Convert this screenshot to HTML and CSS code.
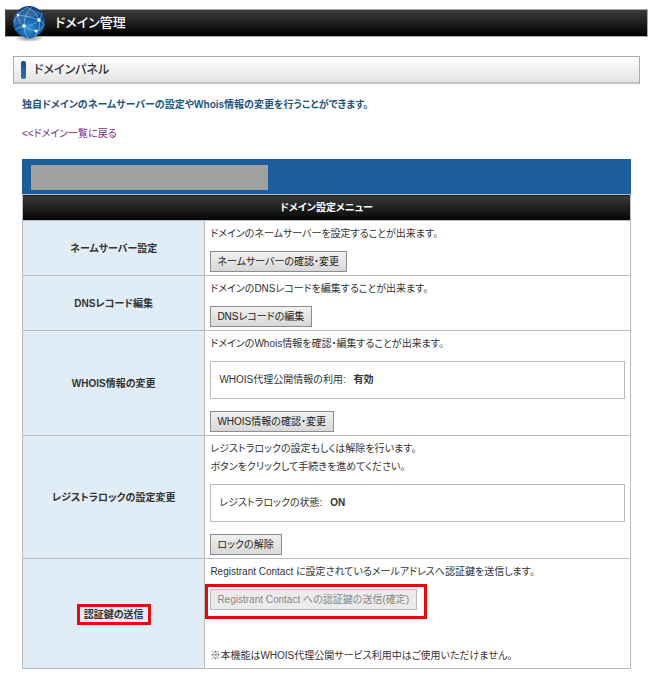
FILE: index.html
```html
<!DOCTYPE html>
<html lang="ja">
<head>
    <meta charset="UTF-8">
    <meta name="viewport" content="width=device-width, initial-scale=1.0">
    <title>ドメイン管理</title>
    <link rel="stylesheet" href="styles.css">
</head>
<body>
    <header class="page-header">
        <svg class="globe" viewBox="0 0 36 38" aria-hidden="true">
            <defs>
                <radialGradient id="ball" cx="50%" cy="70%" r="65%">
                    <stop offset="0" stop-color="#2b93d6"/>
                    <stop offset="0.5" stop-color="#175fa9"/>
                    <stop offset="1" stop-color="#103f7d"/>
                </radialGradient>
                <radialGradient id="shade">
                    <stop offset="0" stop-color="#000" stop-opacity="0.5"/>
                    <stop offset="1" stop-color="#000" stop-opacity="0"/>
                </radialGradient>
            </defs>
            <ellipse cx="18" cy="33" rx="15" ry="4" fill="url(#shade)"/>
            <circle cx="18" cy="17" r="16" fill="url(#ball)"/>
            <path d="M4 10C10 3 25 2 31 9C24 11 12 14 3 22C2 17 2 13 4 10z" fill="#fff" opacity="0.13"/>
            <g fill="none" stroke="#9fd0ea" stroke-width="0.6">
                <path d="M7 10Q19 11 28 15Q32 17 33 20"/>
                <path d="M21 2Q13 9 13 21Q13 28 17 33"/>
                <path d="M15 2Q24 5 28 15Q30 24 24 31"/>
                <path d="M7 10Q7 17 13 21Q19 26 26 26Q30 25 33 20"/>
                <path d="M13 21Q22 21 28 15Q31 11 31 8"/>
                <path d="M7 10Q10 5 16 3M13 21Q7 22 4 25M7 10Q4 13 3 18"/>
            </g>
            <g fill="#e9fbff">
                <circle cx="7" cy="10" r="1.3"/>
                <circle cx="28" cy="15" r="1.7"/>
                <circle cx="13" cy="21" r="1.8"/>
                <circle cx="25" cy="26" r="1.5"/>
            </g>
        </svg>
        <h1>ドメイン管理</h1>
    </header>

    <main class="content">
        <h2 class="panel-title">ドメインパネル</h2>
        <p class="lead">独自ドメインのネームサーバーの設定やWhois情報の変更を行うことができます。</p>
        <p class="back"><a href="#">&lt;&lt;ドメイン一覧に戻る</a></p>

        <table class="menu">
            <thead>
                <tr>
                    <td class="domain" colspan="2"><div class="mask"></div></td>
                </tr>
                <tr>
                    <th class="menu-title" colspan="2">ドメイン設定メニュー</th>
                </tr>
            </thead>
            <tbody>
                <tr>
                    <th scope="row">ネームサーバー設定</th>
                    <td>
                        <p>ドメインのネームサーバーを設定することが出来ます。</p>
                        <button type="button">ネームサーバーの確認・変更</button>
                    </td>
                </tr>
                <tr>
                    <th scope="row">DNSレコード編集</th>
                    <td>
                        <p>ドメインのDNSレコードを編集することが出来ます。</p>
                        <button type="button">DNSレコードの編集</button>
                    </td>
                </tr>
                <tr>
                    <th scope="row">WHOIS情報の変更</th>
                    <td>
                        <p>ドメインのWhois情報を確認・編集することが出来ます。</p>
                        <div class="status">WHOIS代理公開情報の利用: <strong>有効</strong></div>
                        <button type="button">WHOIS情報の確認・変更</button>
                    </td>
                </tr>
                <tr>
                    <th scope="row">レジストラロックの設定変更</th>
                    <td>
                        <p>レジストラロックの設定もしくは解除を行います。<br>ボタンをクリックして手続きを進めてください。</p>
                        <div class="status">レジストラロックの状態: <strong>ON</strong></div>
                        <button type="button">ロックの解除</button>
                    </td>
                </tr>
                <tr>
                    <th scope="row"><span class="marked">認証鍵の送信</span></th>
                    <td>
                        <p>Registrant Contact に設定されているメールアドレスへ認証鍵を送信します。</p>
                        <div class="marked-button">
                            <button type="button" disabled>Registrant Contact への認証鍵の送信(確定)</button>
                        </div>
                        <p class="note">※本機能はWHOIS代理公開サービス利用中はご使用いただけません。</p>
                    </td>
                </tr>
            </tbody>
        </table>
    </main>
</body>
</html>
```
FILE: styles.css
```css
* {
    box-sizing: border-box;
}
body {
    margin: 0;
    padding: 9px 2px 0 5px;
    background: #fff;
    color: #333;
    font-family: "Liberation Sans", "Noto Sans CJK JP", sans-serif;
    font-size: 10px;
    font-feature-settings: "palt";
    line-height: 18px;
}
h1, h2, p {
    margin: 0;
}

/* header bar */
.page-header {
    position: relative;
    height: 28px;
    padding-left: 49px;
    border: 1px solid #aaa;
    border-left-color: #444;
    background: linear-gradient(#3c3c3c, #000);
    color: #fff;
}
.page-header h1 {
    font-size: 13px;
    font-weight: 500;
    line-height: 26px;
}
.globe {
    position: absolute;
    left: 5px;
    top: -5px;
    width: 36px;
    height: 38px;
}

.content {
    padding: 19px 8px 0;
}
.panel-title {
    display: flex;
    align-items: center;
    gap: 8px;
    height: 28px;
    padding-left: 7px;
    border: 1px solid #aaa;
    border-bottom: 2px solid #c4c4c4;
    background: linear-gradient(#fff, #e4e4e4);
    font-size: 12px;
    font-weight: 500;
}
.panel-title::before {
    content: "";
    width: 5px;
    height: 18px;
    border-radius: 2px;
    background: linear-gradient(#1c4c83, #3572b0);
}
.lead {
    margin: 12px 9px 0;
    color: #1d5580;
    font-weight: bold;
}
.back {
    margin: 11px 9px 0;
}
.back a {
    color: #7a2a86;
    text-decoration: none;
}

/* settings table */
.menu {
    width: calc(100% - 18px);
    margin: 16px 9px 0;
    border-collapse: collapse;
}
.menu th,
.menu td {
    padding: 4px 5px 3px;
    border: 1px solid #bbb;
}
.menu tbody th {
    width: 30%;
    background: #e1edf6;
    text-align: center;
}
.menu td {
    text-align: left;
}
.menu .domain {
    padding: 5px 8px 4px;
    border-color: #1c5e9b;
    border-bottom-color: #bbb;
    background: #1c5e9b;
}
.mask {
    width: 39%;
    min-width: 237px;
    height: 25px;
    background: #a0a0a0;
}
.menu .menu-title {
    padding: 4px 5px 3px;
    background: linear-gradient(#3a3a3a, #050505);
    color: #fff;
}
.menu button {
    display: block;
    height: 21px;
    margin-top: 8px;
    padding: 0 7px 0 6px;
    border: 1px solid #8c8c8c;
    border-radius: 0;
    background: linear-gradient(#f0f0f0, #d8d8d8);
    color: #222;
    font: inherit;
    font-feature-settings: inherit;
    line-height: 18px;
}
.menu button:disabled {
    border-color: #bbb;
    background: #ebebeb;
    color: #888;
}
.status {
    margin: 8px 0 12px;
    padding: 9px 8px;
    border: 1px solid #bbb;
}
.status strong {
    margin-left: 5px;
}

/* red highlight frames */
.marked {
    display: inline-block;
    border: 3px solid #e8090c;
    padding: 0 4px;
    line-height: 15px;
}
.marked-button {
    position: relative;
    width: fit-content;
}
.marked-button::after {
    content: "";
    position: absolute;
    inset: -5px -10px -9px -5px;
    border: 3px solid #e8090c;
}
.note {
    margin-top: 37px;
}
```
